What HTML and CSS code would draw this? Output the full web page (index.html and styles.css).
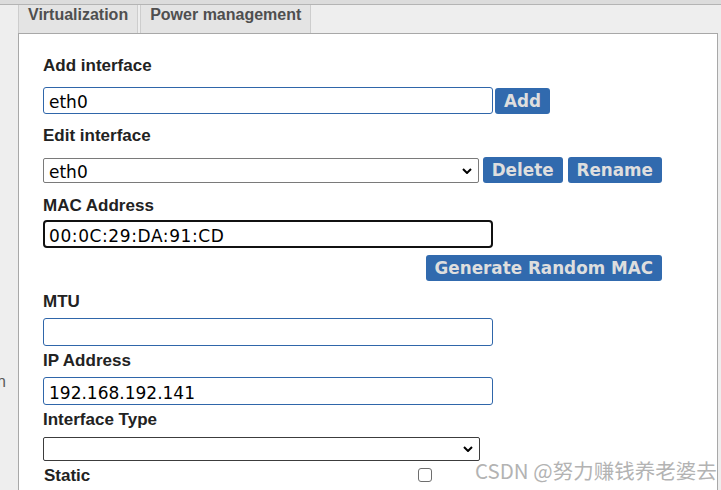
FILE: index.html
```html
<!DOCTYPE html>
<html>
<head>
<meta charset="utf-8">
<link rel="stylesheet" href="styles.css">
</head>
<body>
<div class="topbar"></div>
<div class="main">
  <aside class="side"><span class="side-text">n</span></aside>
  <div class="content">
    <nav class="tabs">
      <div class="tab">Virtualization</div>
      <div class="tab tab-second">Power management</div>
    </nav>
    <section class="panel">
      <form class="form">
        <div class="label">Add interface</div>
        <div class="row row-btn">
          <input class="text blue" type="text" value="eth0">
          <button type="button" class="btn btn-add">Add</button>
        </div>
        <div class="label label-after-btn">Edit interface</div>
        <div class="row row-btn row-edit">
          <div class="select-wrap">
            <select class="select"><option>eth0</option></select>
            <svg class="chev" width="10" height="6" viewBox="0 0 10 6"><path d="M1 1 L5 5 L9 1" fill="none" stroke="#000" stroke-width="2"/></svg>
          </div>
          <button type="button" class="btn btn-del">Delete</button>
          <button type="button" class="btn btn-ren">Rename</button>
        </div>
        <div class="label label-mac">MAC Address</div>
        <input class="text focus field-mac" type="text" value="00:0C:29:DA:91:CD">
        <div class="row row-gen">
          <button type="button" class="btn">Generate Random MAC</button>
        </div>
        <div class="label label-mtu">MTU</div>
        <input class="text blue field" type="text" value="">
        <div class="label label-plain">IP Address</div>
        <input class="text blue field" type="text" value="192.168.192.141">
        <div class="label label-plain">Interface Type</div>
        <div class="select-wrap select-type">
          <select class="select dark"><option></option></select>
          <svg class="chev" width="10" height="6" viewBox="0 0 10 6"><path d="M1 1 L5 5 L9 1" fill="none" stroke="#000" stroke-width="2"/></svg>
        </div>
        <div class="row-static">
          <div class="label static-label">Static</div>
          <input type="checkbox" class="check">
        </div>
      </form>
    </section>
  </div>
</div>
<div class="watermark">CSDN @努力赚钱养老婆去</div>
</body>
</html>
```
FILE: styles.css
```css
html, body {
  margin: 0;
  padding: 0;
}
body {
  width: 721px;
  height: 490px;
  overflow: hidden;
  background: #eeeeee;
  position: relative;
  font-family: "Liberation Sans", Arial, sans-serif;
}
.topbar {
  height: 4px;
  background: #dcdcdc;
  border-bottom: 1px solid #b4b4b4;
}
.main {
  display: flex;
  height: 485px;
  overflow: hidden;
}
.side {
  width: 18px;
  flex: none;
  overflow: hidden;
}
.side-text {
  display: block;
  margin-top: 367px;
  margin-left: -3px;
  font-size: 16px;
  line-height: 20px;
  color: #5a5a5a;
}
.content {
  width: 700px;
  flex: none;
}
.tabs {
  display: flex;
  height: 28px;
}
.tab {
  box-sizing: border-box;
  height: 28px;
  background: #e4e4e4;
  border-left: 1px solid #cdcdcd;
  border-right: 1px solid #cdcdcd;
  padding: 0 9px 0 9px;
  font-weight: bold;
  font-size: 16px;
  line-height: 20px;
  color: #4f4f4f;
}
.tab-second {
  margin-left: 2px;
  padding-right: 9px;
}
.panel {
  background: #fff;
  border: 1px solid #a8a8a8;
  border-bottom: none;
  height: 457px;
  overflow: hidden;
  padding: 22px 0 0 24px;
  box-sizing: border-box;
}
.form {
  width: 619px;
  margin: 0;
}
.label {
  font-weight: bold;
  font-size: 17px;
  line-height: 20px;
  color: #222;
  height: 20px;
}
.label-after-btn { margin-top: 12px; }
.label-mac { margin-top: 13px; }
.label-mtu { margin-top: 11px; }
.label-plain { margin-top: 5px; }
.row {
  display: flex;
  align-items: center;
}
.row-btn { margin-top: 11px; }
.text {
  display: block;
  box-sizing: border-box;
  width: 450px;
  height: 28px;
  margin: 0;
  padding: 3px 5px 0;
  font-family: "DejaVu Sans", Verdana, sans-serif;
  font-size: 17px;
  color: #000;
  background: #fff;
  outline: none;
}
.blue {
  border: 1px solid #2f66aa;
  border-radius: 3px;
}
.row-btn .text {
  height: 27px;
}
.focus {
  border: 2px solid #111;
  border-radius: 4px;
  padding-left: 4px;
}
.field-mac { margin-top: 4px; letter-spacing: 0.6px; }
.field { margin-top: 6px; }
.btn {
  box-sizing: border-box;
  height: 26px;
  margin: 0;
  padding: 1px 9px 0;
  border: none;
  border-radius: 3px;
  background: #316aae;
  color: #dedede;
  font-family: "DejaVu Sans", Verdana, sans-serif;
  font-weight: bold;
  font-size: 16.8px;
  line-height: 25px;
}
.btn-add {
  margin-left: 2px;
  margin-top: 1px;
  width: 55px;
  padding: 1px 0 0;
}
.btn-del { margin-left: 4px; }
.btn-ren { margin-left: 5px; }
.row-edit { align-items: flex-start; }
.row-edit .select-wrap { margin-top: 1px; }
.row-gen {
  margin-top: 7px;
  justify-content: flex-end;
}
.select-wrap {
  position: relative;
  width: 437px;
  height: 25px;
}
.select {
  appearance: none;
  -webkit-appearance: none;
  box-sizing: border-box;
  display: block;
  width: 100%;
  height: 100%;
  margin: 0;
  padding: 2px 5px 0;
  border: 1px solid #7a7a7a;
  border-radius: 2px;
  background: #fff;
  font-family: "DejaVu Sans", Verdana, sans-serif;
  font-size: 17px;
  color: #000;
  outline: none;
}
.select.dark {
  border-color: #3c3c3c;
}
.chev {
  position: absolute;
  right: 7px;
  top: 50%;
  transform: translateY(-50%);
}
.select-type {
  margin-top: 7px;
  height: 24px;
}
.row-static {
  display: flex;
  align-items: flex-start;
  margin-top: 5px;
}
.static-label {
  width: 374px;
  padding-left: 1px;
}
.check {
  appearance: none;
  -webkit-appearance: none;
  box-sizing: border-box;
  width: 14px;
  height: 14px;
  margin: 2px 0 0;
  border: 1px solid #6e6e6e;
  border-radius: 3px;
  background: #fff;
}
.watermark {
  position: absolute;
  left: 475px;
  top: 457px;
  font-family: "Noto Sans CJK SC", "Noto Sans", sans-serif;
  font-size: 20.5px;
  line-height: 26px;
  color: #b3b3b3;
  white-space: nowrap;
}
```
